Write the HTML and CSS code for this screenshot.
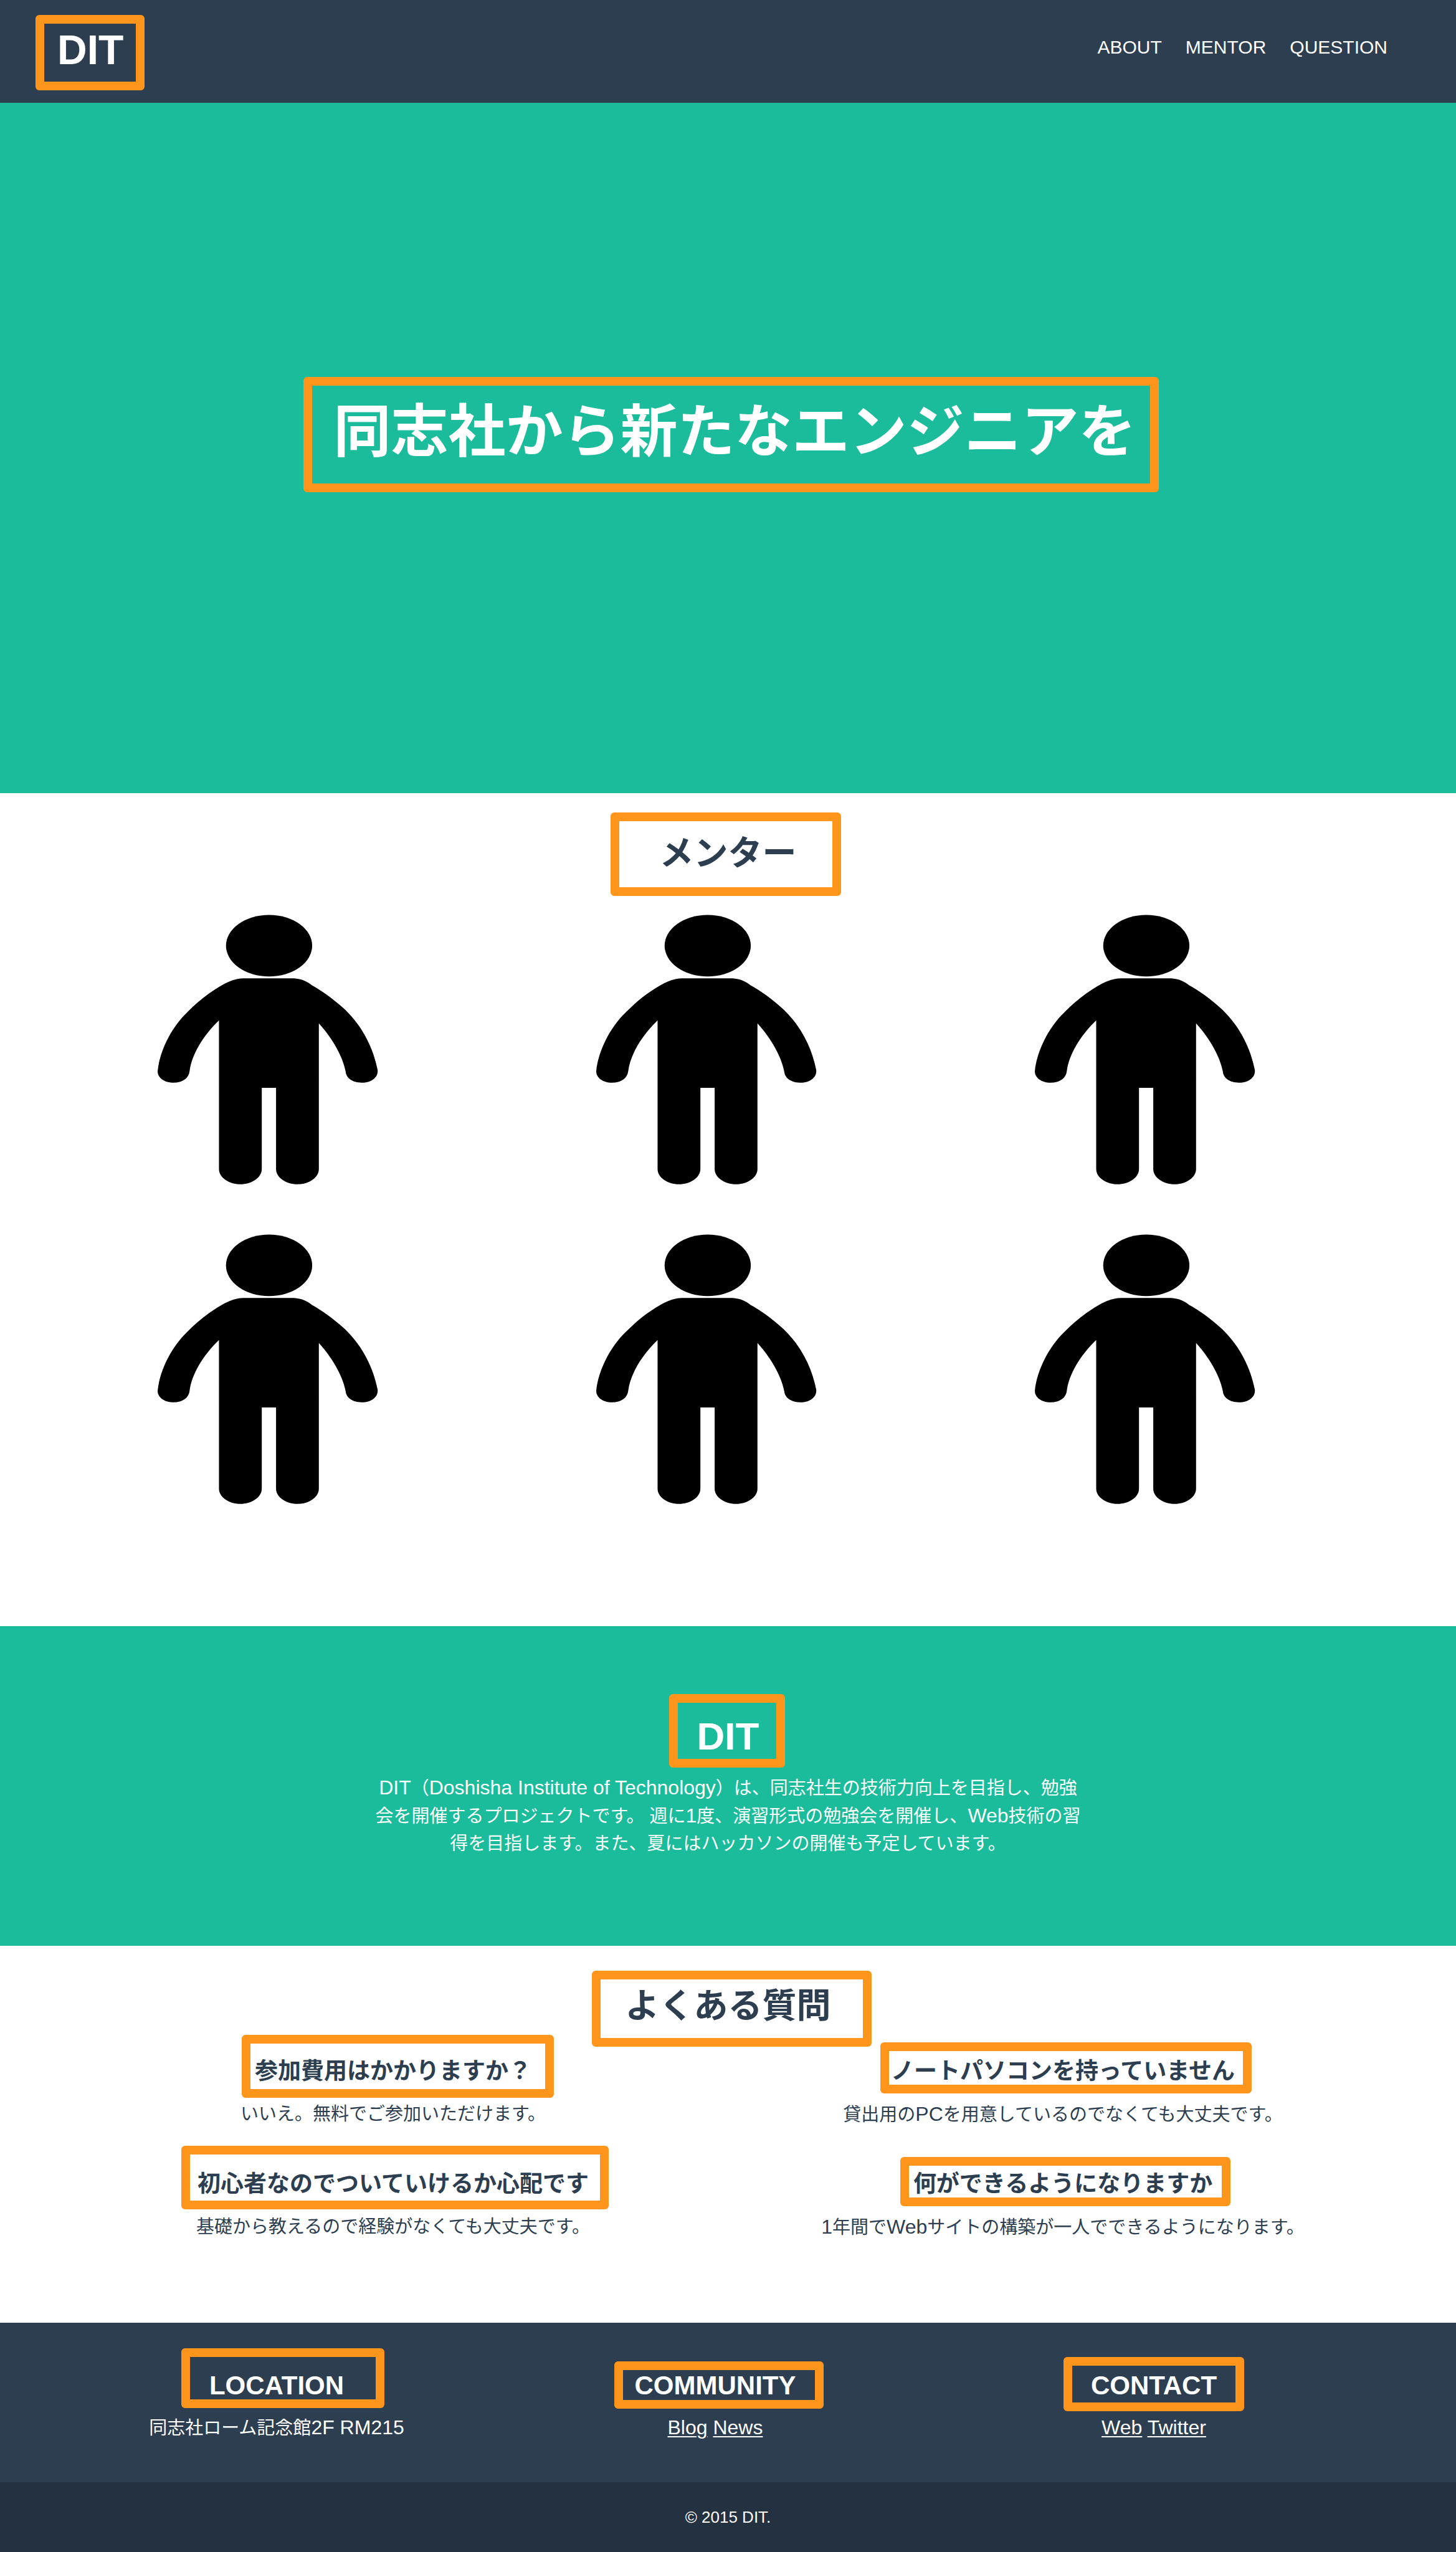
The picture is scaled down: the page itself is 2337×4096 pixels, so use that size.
FILE: index.html
```html
<!DOCTYPE html>
<html lang="ja">
<head>
<meta charset="utf-8">
<meta name="viewport" content="width=device-width, initial-scale=1">
<title>DIT</title>
<link rel="stylesheet" href="styles.css">
</head>
<body>
<svg class="sprite" aria-hidden="true">
  <symbol id="person" viewBox="5 0 480 560">
    <ellipse cx="231.800" cy="97" rx="75.500" ry="54"/>
    <path d="M188 154.300H275C289 155 300 160.500 307 166.500C322 174.500 345 190.500 365 209C397 240 415 278.500 422 315C423 328 411 337 394 337C378 337 367 329 366 318C362 294.500 345 261.500 319 233V488.500C319 503.500 301 515 281.500 515C262 515 244 503.500 244 488.500V346H219V488.500C219 503.500 201 515 181.500 515C162 515 144 503.500 144 488.500V228C115 256 96 289 92.500 317C91 329 80 337 64 337C48 337 36.500 328 36.500 317C40 282 60 241 88 214C112 189.500 140 169.500 163 159.500C171 156.500 179 154.300 188 154.300Z"/>
  </symbol>
</svg>

<header class="site-header">
  <a class="logo mark mark-logo" href="#top">DIT</a>
  <nav class="nav">
    <a href="#about">ABOUT</a>
    <a href="#mentor">MENTOR</a>
    <a href="#question">QUESTION</a>
  </nav>
</header>

<main>
  <section class="hero" id="top">
    <h1 class="mark mark-hero">同志社から新たなエンジニアを</h1>
  </section>

  <section class="mentor" id="mentor">
    <h2 class="mark mark-mentor">メンター</h2>
    <ul class="columns people">
      <li><svg class="person" role="img" aria-label="メンター"><use href="#person"/></svg></li>
      <li><svg class="person" role="img" aria-label="メンター"><use href="#person"/></svg></li>
      <li><svg class="person" role="img" aria-label="メンター"><use href="#person"/></svg></li>
      <li><svg class="person" role="img" aria-label="メンター"><use href="#person"/></svg></li>
      <li><svg class="person" role="img" aria-label="メンター"><use href="#person"/></svg></li>
      <li><svg class="person" role="img" aria-label="メンター"><use href="#person"/></svg></li>
    </ul>
  </section>

  <section class="about" id="about">
    <h2 class="mark mark-about">DIT</h2>
    <p><span class="en">DIT</span>（<span class="en">Doshisha Institute of Technology</span>）は、同志社生の技術力向上を目指し、勉強会を開催するプロジェクトです。 週に<span class="en">1</span>度、演習形式の勉強会を開催し、<span class="en">Web</span>技術の習得を目指します。また、夏にはハッカソンの開催も予定しています。</p>
  </section>

  <section class="question" id="question">
    <h2 class="mark mark-question">よくある質問</h2>
    <div class="faq">
      <article>
        <h3 class="mark mark-fee">参加費用はかかりますか？</h3>
        <p>いいえ。無料でご参加いただけます。</p>
      </article>
      <article>
        <h3 class="mark mark-laptop">ノートパソコンを持っていません</h3>
        <p>貸出用の<span class="en">PC</span>を用意しているのでなくても大丈夫です。</p>
      </article>
      <article>
        <h3 class="mark mark-beginner">初心者なのでついていけるか心配です</h3>
        <p>基礎から教えるので経験がなくても大丈夫です。</p>
      </article>
      <article>
        <h3 class="mark mark-goal">何ができるようになりますか</h3>
        <p><span class="en">1</span>年間で<span class="en">Web</span>サイトの構築が一人でできるようになります。</p>
      </article>
    </div>
  </section>
</main>

<footer>
  <div class="columns links">
    <section>
      <h3 class="mark mark-location">LOCATION</h3>
      <p>同志社ローム記念館<span class="en">2F RM215</span></p>
    </section>
    <section>
      <h3 class="mark mark-community">COMMUNITY</h3>
      <p class="en"><a href="#blog">Blog</a> <a href="#news">News</a></p>
    </section>
    <section>
      <h3 class="mark mark-contact">CONTACT</h3>
      <p class="en"><a href="#web">Web</a> <a href="#twitter">Twitter</a></p>
    </section>
  </div>
  <p class="copyright">© 2015 DIT.</p>
</footer>
</body>
</html>
```
FILE: styles.css
```css
* {
  box-sizing: border-box;
  margin: 0;
  padding: 0;
}

body {
  background: #fff;
  color: #2c3e50;
  font: 29px/44px "Liberation Sans", "Noto Sans CJK JP", sans-serif;
}

a {
  color: inherit;
}

ul {
  list-style: none;
}

.sprite {
  position: absolute;
  width: 0;
  height: 0;
}

/* Latin letters run small beside kana, so they get a larger size */
.en {
  font-size: 32px;
}

/* Highlight frame laid over a heading; each heading sets how far it reaches */
.mark {
  position: relative;
  width: fit-content;
}

.mark::after {
  content: "";
  position: absolute;
  inset: var(--reach);
  border: 14px solid #ff951a;
  border-radius: 6px;
  pointer-events: none;
}

.mark-logo { --reach: -16px -34px -25px -35px; }
.mark-hero { --reach: -20px -36px -29px -48px; }
.mark-mentor { --reach: -25px -71px -29px -78px; }
.mark-about { --reach: -28px -42px -10px -45px; }
.mark-question { --reach: -16px -65px -26px -53px; }
.mark-fee { --reach: -29px -36px -12px -21px; }
.mark-laptop { --reach: -17px -27px -5px -17px; }
.mark-beginner { --reach: -32px -32px -10px -26px; }
.mark-goal { --reach: -14px -29px -5px -21px; }
.mark-location { --reach: -30px -65px -6px -45px; }
.mark-community { --reach: -9px -45px -7px -33px; }
.mark-contact { --reach: -16px -44px -11px; }

.site-header {
  display: flex;
  justify-content: space-between;
  align-items: flex-start;
  height: 165px;
  padding: 40px 110px 0 92px;
  background: #2c3e50;
  color: #fff;
}

.logo {
  font-size: 66px;
  line-height: 80px;
  font-weight: 700;
  text-decoration: none;
}

.nav {
  display: flex;
  gap: 38px;
  padding-top: 14px;
  font-size: 30px;
}

.nav a {
  text-decoration: none;
}

.hero {
  display: flex;
  flex-direction: column;
  align-items: center;
  height: 1108px;
  padding: 460px 0 0 22px;
  background: #1abc9c;
  color: #fff;
}

h1 {
  font-size: 92px;
  line-height: 136px;
}

h2 {
  margin: 0 auto;
  font-size: 55px;
  line-height: 80px;
}

h3 {
  margin: 0 auto;
  font-size: 37px;
  line-height: 60px;
}

.mentor {
  height: 1337px;
  padding-top: 56px;
}

.columns {
  display: grid;
  grid-template-columns: repeat(3, 1fr);
  padding: 0 133px 0 92px;
}

.people {
  padding-top: 20px;
}

.people li {
  display: flex;
  justify-content: center;
}

.person {
  width: 440px;
  height: 513px;
}

.about {
  height: 513px;
  padding-top: 137px;
  background: #1abc9c;
  color: #fff;
  text-align: center;
}

.about h2 {
  font-size: 62px;
}

.about p {
  max-width: 1140px;
  margin: 20px auto 0;
}

.question {
  height: 605px;
  padding-top: 56px;
}

.faq {
  display: grid;
  grid-template-columns: 1fr 1fr;
  row-gap: 60px;
  width: 92%;
  margin: 36px auto 0;
  text-align: center;
}

.faq p {
  margin-top: 16px;
}

footer {
  background: #2c3e50;
  color: #fff;
}

.links {
  height: 256px;
  padding-top: 71px;
  text-align: center;
}

.links h3 {
  font-size: 42px;
}

.links p {
  margin-top: 15px;
}

.links a {
  text-decoration-thickness: 2px;
  text-underline-offset: 3px;
}

.copyright {
  padding: 34px 0;
  background: #233140;
  font-size: 26px;
  text-align: center;
}
```
